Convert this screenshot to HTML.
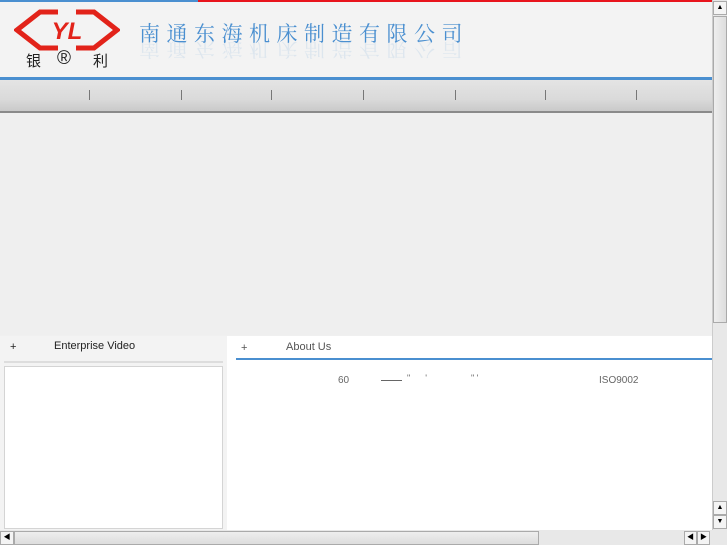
<!DOCTYPE html>
<html><head><meta charset="utf-8"><style>
*{margin:0;padding:0;box-sizing:border-box}
body{width:727px;height:545px;overflow:hidden;background:#f0f0f0;font-family:"Liberation Sans","Noto Sans CJK SC",sans-serif;position:relative}
.a{position:absolute}
</style></head><body>
<div class="a" style="left:0;top:0;width:712px;height:78px;background:#f3f3f3"></div>
<div class="a" style="left:0;top:0;width:198px;height:2px;background:#4a8fd0"></div>
<div class="a" style="left:198px;top:0;width:514px;height:2px;background:#e8141c"></div>
<svg class="a" style="left:14px;top:8px" width="106" height="44" viewBox="0 0 106 44">
<polyline points="44,4 26,4 3,22 26,40 44,40" fill="none" stroke="#e2231a" stroke-width="5" stroke-linejoin="miter"/>
<polyline points="62,4 80,4 103,22 80,40 62,40" fill="none" stroke="#e2231a" stroke-width="5" stroke-linejoin="miter"/>
<text x="53" y="31" text-anchor="middle" font-family="Liberation Sans" font-weight="bold" font-style="italic" font-size="24" fill="#e2231a">YL</text>
</svg>
<div class="a" style="left:26px;top:50px;font-size:15px;color:#222">银</div>
<div class="a" style="left:57px;top:48px;font-size:19px;color:#222">®</div>
<div class="a" style="left:93px;top:50px;font-size:15px;color:#222">利</div>
<div class="a" style="left:139px;top:18px;font-size:21px;color:#4a8fd0;letter-spacing:6.5px;font-family:'Noto Serif CJK SC',serif">南通东海机床制造有限公司</div>
<div class="a" style="left:139px;top:42px;font-size:21px;color:#4a8fd0;letter-spacing:6.5px;font-family:'Noto Serif CJK SC',serif;transform:scaleY(-1);opacity:.12;height:22px;overflow:hidden">南通东海机床制造有限公司</div>
<div class="a" style="left:0;top:77px;width:712px;height:3px;background:#4a8fd0"></div>
<div class="a" style="left:0;top:80px;width:712px;height:32px;background:linear-gradient(#e4e4e4,#dadada 60%,#c8c8c8)"></div>
<div class="a" style="left:0;top:111px;width:712px;height:2px;background:#8a8a8a"></div>
<div class="a" style="left:89px;top:90px;width:1px;height:10px;background:#777"></div>
<div class="a" style="left:181px;top:90px;width:1px;height:10px;background:#777"></div>
<div class="a" style="left:271px;top:90px;width:1px;height:10px;background:#777"></div>
<div class="a" style="left:363px;top:90px;width:1px;height:10px;background:#777"></div>
<div class="a" style="left:455px;top:90px;width:1px;height:10px;background:#777"></div>
<div class="a" style="left:545px;top:90px;width:1px;height:10px;background:#777"></div>
<div class="a" style="left:636px;top:90px;width:1px;height:10px;background:#777"></div>
<div class="a" style="left:0;top:113px;width:712px;height:222px;background:#efefef"></div>
<div class="a" style="left:0;top:336px;width:227px;height:194px;background:#f3f3f3"></div>
<div class="a" style="left:10px;top:341px;font-size:11px;color:#222">+</div>
<div class="a" style="left:54px;top:340px;font-size:11px;color:#222">Enterprise Video</div>
<div class="a" style="left:4px;top:361px;width:219px;height:2px;background:#ddd"></div>
<div class="a" style="left:4px;top:366px;width:219px;height:163px;background:#fff;border:1px solid #d4d4d4"></div>
<div class="a" style="left:227px;top:336px;width:485px;height:194px;background:#fff"></div>
<div class="a" style="left:241px;top:342px;font-size:11px;color:#555">+</div>
<div class="a" style="left:286px;top:341px;font-size:11px;color:#555">About Us</div>
<div class="a" style="left:236px;top:358px;width:476px;height:2px;background:#4a8fd0"></div>
<div class="a" style="left:338px;top:375px;font-size:10px;color:#666">60</div>
<div class="a" style="left:381px;top:380px;width:21px;height:1px;background:#666"></div>
<div class="a" style="left:407px;top:373px;font-size:9px;color:#666">"&nbsp;&nbsp;&nbsp;&nbsp;&nbsp;&nbsp;'</div>
<div class="a" style="left:471px;top:373px;font-size:9px;color:#666">" '</div>
<div class="a" style="left:599px;top:375px;font-size:10px;color:#666">ISO9002</div>
<div class="a" style="left:712px;top:0;width:15px;height:530px;background:#e8e8e8;border-left:1px solid #ccc"></div>
<div class="a" style="left:713px;top:1px;width:14px;height:14px;background:#f4f4f4;border:1px solid #aaa;font-size:7px;text-align:center;line-height:12px">▲</div>
<div class="a" style="left:713px;top:16px;width:14px;height:307px;background:linear-gradient(90deg,#eee,#ddd);border:1px solid #aaa"></div>
<div class="a" style="left:713px;top:501px;width:14px;height:14px;background:#f4f4f4;border:1px solid #aaa;font-size:7px;text-align:center;line-height:12px">▲</div>
<div class="a" style="left:713px;top:515px;width:14px;height:14px;background:#f4f4f4;border:1px solid #aaa;font-size:7px;text-align:center;line-height:12px">▼</div>
<div class="a" style="left:0;top:530px;width:727px;height:15px;background:#e8e8e8"></div>
<div class="a" style="left:0;top:531px;width:14px;height:14px;background:#f4f4f4;border:1px solid #aaa;font-size:7px;text-align:center;line-height:12px">◀</div>
<div class="a" style="left:14px;top:531px;width:525px;height:14px;background:linear-gradient(#eee,#ddd);border:1px solid #aaa"></div>
<div class="a" style="left:684px;top:531px;width:13px;height:14px;background:#f4f4f4;border:1px solid #aaa;font-size:7px;text-align:center;line-height:12px">◀</div>
<div class="a" style="left:697px;top:531px;width:13px;height:14px;background:#f4f4f4;border:1px solid #aaa;font-size:7px;text-align:center;line-height:12px">▶</div>
</body></html>
